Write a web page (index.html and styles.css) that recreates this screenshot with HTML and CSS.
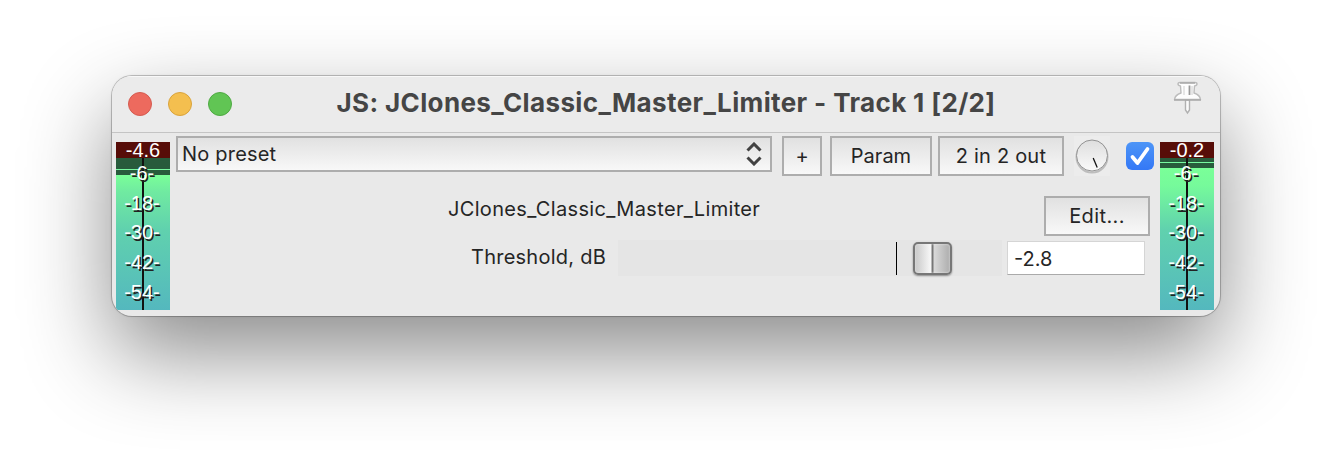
FILE: index.html
```html
<!DOCTYPE html>
<html lang="en">
<head>
<meta charset="utf-8">
<title>JS: JClones_Classic_Master_Limiter</title>
<link rel="stylesheet" href="styles.css">
</head>
<body>
<main class="window">
  <header class="titlebar">
    <div class="lights"><i class="light red"></i><i class="light yellow"></i><i class="light green"></i></div>
    <h1 class="title">JS: JClones_Classic_Master_Limiter - Track 1 [2/2]</h1>
    <svg class="pin" width="32" height="34" viewBox="0 0 32 34">
      <path d="M9 1.500h15q2 0 2 1.500t-2.500 2L23 12q6 2 6.500 6.500H3.500Q4 14 10 12L9.500 5Q7 4.500 7 3t2-1.500z" fill="#fdfdfd" stroke="#bcbcbc" stroke-width="1.400" stroke-linejoin="round"/>
      <path d="M13 5v9M21 5v9" stroke="#dedede" stroke-width="1.500"/>
      <path d="M18.500 4.500v9.500" stroke="#999" stroke-width="1.800"/>
      <path d="M14.500 19v10l2 3 2-3V19z" fill="#fafafa" stroke="#b0b0b0" stroke-width="1.400"/>
      <path d="M3 19h27" stroke="#aaa" stroke-width="1.500"/>
      <path d="M9 2h15" stroke="#aaa" stroke-width="1.300"/>
    </svg>
  </header>
  <div class="body">
    <div class="meter">
      <span class="peak">-4.6</span>
      <div class="level level-in"></div>
      <div class="scale"><span>-6-</span><span>-18-</span><span>-30-</span><span>-42-</span><span>-54-</span></div>
    </div>
    <section class="panel">
      <div class="toolbar">
        <div class="preset">
          <span>No preset</span>
          <svg width="16" height="24" viewBox="0 0 16 24" fill="none" stroke="#424242" stroke-width="3"><path d="M1.500 8.500L8 2l6.500 6.500M1.500 15.500L8 22l6.500-6.500"/></svg>
        </div>
        <button class="btn plus">+</button>
        <button class="btn param">Param</button>
        <button class="btn io">2 in 2 out</button>
        <div class="knobbox">
          <svg width="36" height="38" viewBox="0 0 36 38">
            <defs><linearGradient id="k" x2="0" y2="1"><stop offset="0" stop-color="#dedede"/><stop offset="1" stop-color="#fafafa"/></linearGradient></defs>
            <circle cx="18" cy="18" r="15.500" fill="none" stroke="#bdbdbd" stroke-width="2"/>
            <circle cx="18" cy="16.500" r="15.500" fill="url(#k)" stroke="#939393"/>
            <path d="M19.200 19l4 9.500" stroke="#111" stroke-width="1.300"/>
          </svg>
        </div>
        <div class="check"><svg width="28" height="28" viewBox="0 0 28 28"><path d="M6.500 15l5 6L21.500 7" fill="none" stroke="#fff" stroke-width="3.800" stroke-linecap="round" stroke-linejoin="round"/></svg></div>
      </div>
      <div class="namerow"><span class="name">JClones_Classic_Master_Limiter</span><button class="btn edit">Edit...</button></div>
      <div class="param-row">
        <label class="label">Threshold, dB</label>
        <div class="track"><i class="tick"></i><i class="thumb"></i></div>
        <div class="value">-2.8</div>
      </div>
    </section>
    <div class="meter">
      <span class="peak">-0.2</span>
      <div class="level level-out"></div>
      <div class="scale"><span>-6-</span><span>-18-</span><span>-30-</span><span>-42-</span><span>-54-</span></div>
    </div>
  </div>
</main>
</body>
</html>
```
FILE: styles.css
```css
* { box-sizing: border-box; }
body { margin: 0; height: 464px; padding: 76px 112px 0; background: #fff; overflow: hidden; font-family: Inter, "Liberation Sans", sans-serif; font-size: 20px; color: #252525; }
.window { width: 1108px; height: 240px; border-radius: 20px; background: #e9e9e9; box-shadow: 0 0 0 1px rgba(0,0,0,.2), 0 0 3px rgba(0,0,0,.12), 0 37px 88px rgba(0,0,0,.46); overflow: hidden; }
.titlebar { height: 57px; border-bottom: 1px solid #c4c4c4; display: grid; grid-template-columns: 150px 1fr 150px; background: #ebebeb; box-shadow: inset 0 1px 0 #f8f8f8; }
.lights { display: flex; gap: 16px; padding: 16px; }
.light { width: 24px; height: 24px; border-radius: 50%; border: 1px solid; }
.red { background: #ed6a5e; border-color: #d45b50; }
.yellow { background: #f4bf4f; border-color: #d9a33c; }
.green { background: #61c554; border-color: #4fa943; }
.title { margin: 0; text-align: center; white-space: nowrap; font-size: 26px; line-height: 54px; font-weight: 700; color: #454545; letter-spacing: .37px; }
.pin { justify-self: end; margin: 5px 17px 0 0; }
.body { height: 183px; display: flex; padding: 9px 6px 6px 4px; justify-content: space-between; }
.meter { width: 54px; height: 168px; display: grid; grid-template-rows: 16px 152px; font: 20px/16px "Liberation Sans", Arial, sans-serif; color: #fff; text-align: center; }
.peak { background: #570d08; }
.level, .scale { grid-area: 2 / 1; }
.level-in { background: linear-gradient(#111,#111) 26px 0/2px 100% no-repeat, linear-gradient(#285b3c 0 11px,#78f8a0 11px 12px,#285b3c 12px 17px,#7aff98 17px,#70eaa1 34px,#60d1ae 72px,#54b8be 100%); }
.level-out { background: linear-gradient(#111,#111) 26px 0/2px 100% no-repeat, linear-gradient(#285b3c 0 4px,#78f8a0 4px 5px,#285b3c 5px 10px,#7aff98 10px,#76fa9b 28px,#60d1ae 72px,#54b8be 100%); }
.meter .peak { grid-area: 1 / 1; }
.scale { display: flex; flex-direction: column; gap: 13.7px; padding: 7px 2px 0 0; text-shadow: 1.5px 1.5px 0 #222; }
.scale span { height: 16px; }
.panel { width: 978px; margin-top: -6px; }
.toolbar { display: flex; align-items: flex-start; height: 40px; }
.preset, .btn { border: 2px solid #adadad; background: linear-gradient(#e1e1e1,#f8f8f8); }
.preset { width: 596px; height: 36px; padding: 0 8px 0 4px; display: flex; align-items: center; justify-content: space-between; letter-spacing: .2px; margin-right: 10px; }
.btn { height: 40px; padding: 0; font: inherit; color: inherit; text-align: center; }
.plus { width: 40px; margin-right: 8px; }
.param { width: 102px; margin-right: 6px; }
.io { width: 126px; margin-right: 10px; letter-spacing: .2px; }
.knobbox { width: 36px; height: 40px; margin-right: 16px; padding-top: 3px; background: #ececec; }
.check { width: 28px; height: 28px; margin-top: 6px; border-radius: 6px; background: linear-gradient(#4d95f7,#3478f6); }
.check svg, .knobbox svg { display: block; }
.namerow { display: flex; justify-content: space-between; padding: 20px 4px 0 272px; height: 60px; }
.name { line-height: 26px; letter-spacing: .33px; }
.edit { width: 106px; letter-spacing: .4px; }
.param-row { display: flex; height: 40px; padding-top: 4px; }
.label { width: 430px; text-align: right; line-height: 34px; margin-right: 12px; letter-spacing: .25px; }
.track { width: 384px; height: 36px; background: #e5e5e5; display: flex; margin-right: 5px; }
.tick { width: 1px; height: 33px; margin: 2px 16px 0 278px; background: #000; }
.thumb { width: 39px; height: 33px; margin-top: 2px; border: 2px solid #777; border-radius: 5px; background: linear-gradient(90deg,#c8c8c8 0,#f8f8f8 16px,#777 17px 18px,#d9d9d9 19px,#adadad 100%); box-shadow: inset 0 0 2px #eee, 0 1px 2px rgba(0,0,0,.4); }
.value { width: 138px; height: 34px; margin-top: 1px; padding-left: 6px; line-height: 35px; background: #fff; border: 1px solid #d5d5d5; border-bottom: 1px solid #aaa; }
```
